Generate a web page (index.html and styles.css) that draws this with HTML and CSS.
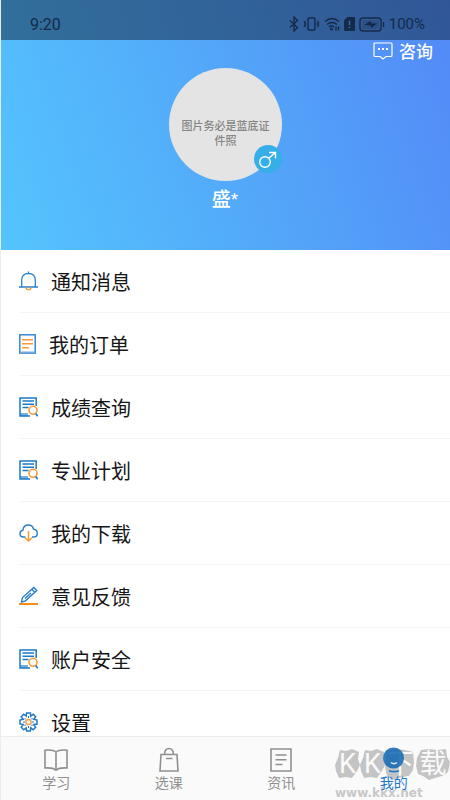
FILE: index.html
```html
<!DOCTYPE html>
<html lang="zh-CN">
<head>
<meta charset="utf-8">
<meta name="viewport" content="width=device-width, initial-scale=1">
<title>我的</title>
<link rel="stylesheet" href="styles.css">
</head>
<body>
<svg class="defs" aria-hidden="true">
  <symbol id="report" viewBox="0 0 19 20">
    <path d="M17.200 9V1H1v18h10" fill="none" stroke="#1d78c6" stroke-width="1.500"/>
    <path d="M1 16h8v3H1z" fill="#1d78c6" opacity=".6"/>
    <path d="M3.500 4h11.500M3.500 7.300h11.500M3.500 10.500h6" stroke="#1d78c6" stroke-width="1.500"/>
    <circle cx="14" cy="13.300" r="4" fill="#fff" stroke="#f79a35" stroke-width="1.600"/>
    <path d="M16.700 16.500l2 2.800" stroke="#1d78c6" stroke-width="1.600"/>
  </symbol>
</svg>
<div class="app">
  <header class="hero">
    <div class="status">
      <span class="time">9:20</span>
      <div class="indicators">
        <svg width="10" height="16" viewBox="0 0 10 16"><path d="M1 4.500l7.500 7L5 15V1l3.500 3.500L1 11.500" class="ink"/></svg>
        <svg width="17" height="14" viewBox="0 0 17 14"><rect x="5" y="1" width="7" height="12" rx="1" class="ink"/><path d="M2.500 4L1.500 5.500l1 1.500-1 1.500 1 1.500M14.500 4l1 1.500-1 1.500 1 1.500-1 1.500" class="ink"/></svg>
        <svg width="16" height="14" viewBox="0 0 16 14"><path d="M1 4.500q7-6 14 0M3 7.500q5-4 10 0M5 10q3-2.500 5 0" class="ink"/><circle cx="7.500" cy="12" r="1.500" class="solid"/><path d="M12 9.500v4M14.500 9.500v4" class="ink"/></svg>
        <svg width="11" height="14" viewBox="0 0 11 14"><path d="M3.500 0H10q1 0 1 1v12q0 1-1 1H1q-1 0-1-1V3.500z" class="solid"/><path d="M5.500 3.500v4.500M5.500 9.500v1.500" stroke="#3b659f" stroke-width="1.600"/></svg>
        <svg width="26" height="15" viewBox="0 0 26 15"><rect x="1" y="1" width="21" height="13" rx="3" class="ink"/><rect x="3" y="3" width="17" height="9" rx="1" fill="#25405f" opacity=".4"/><path d="M5 8l7-4v2.500h6L12 11V8.500z" fill="#102a49"/><path d="M24.500 5v5" class="ink"/></svg>
        <span class="percent">100%</span>
      </div>
    </div>
    <div class="toolbar">
      <button class="consult" type="button">
        <svg width="20" height="18" viewBox="0 0 20 18"><path d="M7 14.500H2q-1 0-1-1V2q0-1 1-1h16q1 0 1 1v11.500q0 1-1 1h-5L10 17l-3-2.500" fill="none" stroke="#fff" stroke-width="1.200"/><path d="M5 7h2M9 7h2M13 7h2" stroke="#fff" stroke-width="1.800"/></svg>
        咨询
      </button>
    </div>
    <div class="profile">
      <div class="avatar">
        <span>图片务必是蓝底证件照</span>
        <svg class="gender" viewBox="0 0 28 28" role="img" aria-label="男"><circle cx="14" cy="14" r="14" fill="#36aee8"/><circle cx="11" cy="17" r="5.300" fill="none" stroke="#fff" stroke-width="1.400"/><path d="M15 13l6.500-5.500M15 7.500h6.500v6" fill="none" stroke="#fff" stroke-width="1.400"/></svg>
      </div>
      <h1 class="name">盛*</h1>
    </div>
  </header>

  <main class="menu">
    <a class="row" href="#messages"><svg width="19" height="20" viewBox="0 0 19 20"><path d="M0 16h19M2.700 16V9q0-6.500 6.800-6.500T16.300 9v7M9.500 2.500V.5" fill="none" stroke="#2b80cb" stroke-width="1.300"/><path d="M7 16.500q0 2.300 2.500 2.300t2.500-2.300" fill="none" stroke="#f9a03c" stroke-width="1.400"/></svg>通知消息</a>
    <a class="row" href="#orders"><svg width="17" height="20" viewBox="0 0 17 20"><rect x=".8" y=".8" width="15.400" height="18.400" fill="none" stroke="#2b80cb" stroke-width="1.400"/><path d="M1 18.500h15" stroke="#72aadb" stroke-width="2"/><path d="M3 5.800h11M3 9.800h11M3 13.800h7" stroke="#f79a35" stroke-width="1.400"/></svg>我的订单</a>
    <a class="row" href="#scores"><svg width="19" height="20"><use href="#report"/></svg>成绩查询</a>
    <a class="row" href="#plan"><svg width="19" height="20"><use href="#report"/></svg>专业计划</a>
    <a class="row" href="#downloads"><svg width="19" height="20" viewBox="0 0 19 20"><path d="M6.500 14H4.500Q1 14 1 10.800 1 7.500 4 7.200 4.200 2 9.500 2q4 0 5 4 3.800.8 3.800 4.200 0 3.800-3.800 3.800h-1.500" fill="none" stroke="#2b7fc9" stroke-width="1.400"/><path d="M9.500 8v10M6 14.800L9.500 18l3.500-3.200" fill="none" stroke="#f7992f" stroke-width="1.500"/></svg>我的下载</a>
    <a class="row" href="#feedback"><svg width="19" height="20" viewBox="0 0 19 20"><path d="M2.500 16l1-4.500L14.800 1.500l3 3L6.500 14.800zM13 3.500l2.800 2.800M6 12.500l6-5.500" fill="none" stroke="#2279c4" stroke-width="1.300"/><path d="M0 18h19" stroke="#f9891d" stroke-width="2"/></svg>意见反馈</a>
    <a class="row" href="#security"><svg width="19" height="20"><use href="#report"/></svg>账户安全</a>
    <a class="row" href="#settings"><svg width="19" height="20" viewBox="0 0 19 20"><path d="M7.600 1h3.800l.3 3.200 2.500-2 2.500 2.600-2 2.400 3.300.8v4l-3.300.6 2 2.600-2.500 2.600-2.500-2L11.400 19H7.600l-.4-3.200-2.500 2-2.500-2.600 2-2.600L1 12V8l3.200-.8-2-2.400 2.500-2.600 2.500 2z" fill="#fff" stroke="#2279c4" stroke-width="1.500"/><path d="M9.500 4v2M5.500 6l1.500 1.500M13.500 6L12 7.500M4 10h2M13 10h2M5.500 14L7 12.500M13.500 14L12 12.500M9.500 16v-2" stroke="#2279c4"/><circle cx="9.500" cy="10" r="2.600" fill="#fff" stroke="#f7a04a" stroke-width="1.500"/></svg>设置</a>
  </main>

  <nav class="tabs">
    <a class="tab" href="#study"><svg width="26" height="26" viewBox="0 0 26 26"><path d="M13 5Q10 2.500 2 3.200V21q8-.5 11 2.200Q16 20.500 24 21V3.200Q16 2.500 13 5zv18" class="line"/></svg>学习</a>
    <a class="tab" href="#courses"><svg width="26" height="26" viewBox="0 0 26 26"><path d="M5 7.500h16L22 24H4zM8.500 7Q9 1.500 13 1.500T17.500 7M10 11.500h6.500" class="line"/></svg>选课</a>
    <a class="tab" href="#news"><svg width="26" height="26" viewBox="0 0 26 26"><path d="M3 2h20v22H3zM7.500 8h11M7.500 12.800h11M7.500 17.500h7" class="line"/></svg>资讯</a>
    <a class="tab active" href="#mine" aria-current="page"><svg width="26" height="26" viewBox="0 0 26 26"><circle cx="12.500" cy="11" r="10.500" fill="#1669b4" opacity=".88"/><path d="M10 15.500q3 2.500 6 0" fill="none" stroke="#e5eef6" stroke-width="1.500"/><path d="M8 23.800q5 1.800 10 0" fill="none" stroke="#1d78cb" stroke-width="1.700"/></svg>我的</a>
  </nav>

  <div class="watermark">
    <svg class="blobs" viewBox="0 0 115 32" aria-hidden="true"><path d="M5 2l6 1 6-2 7 3-1 7 2 6-3 6-5 7-6-1-7 1-3-7-1-6 3-7zM30 2l6 1 6-2 7 3-1 7 2 6-3 6-5 7-6-1-7 1-3-7-1-6 3-7zM52 3l8-2 10 1 8 2 1 10-1 8-4 6-8 1-6 3-8-4-2-9 1-7zM86 2l8-1 8 1 9-1 1 8 3 5-2 10-6 4-7 2-6 2-6-4-5-2-2-8 1-8z"/></svg>
    <div class="marks"><span>K</span><span>K</span><span>下</span><span>载</span></div>
    <div class="site">www.kkx.net</div>
  </div>
</div>
</body>
</html>
```
FILE: styles.css
```css
* {
  box-sizing: border-box;
}

body {
  margin: 0;
  font-family: Roboto, "Noto Sans CJK SC", sans-serif;
  color: #161616;
}

a {
  color: inherit;
  text-decoration: none;
}

svg {
  flex: none;
}

.defs {
  position: absolute;
  width: 0;
  height: 0;
}

.app {
  position: relative;
  display: flex;
  flex-direction: column;
  height: 100vh;
  overflow: hidden;
  background: #fff;
  border-left: 1px solid #ececec;
}

.hero {
  flex: none;
  margin-left: -1px;
  padding-bottom: 38px;
  background: linear-gradient(70deg, #54c5fd 0%, #53a5f9 55%, #5389f7 100%);
  color: #fff;
}

.status {
  display: flex;
  align-items: center;
  justify-content: space-between;
  height: 40px;
  padding: 8px 25px 0 30px;
  background: rgba(20, 40, 65, 0.52);
  color: #132b49;
}

.time {
  font-size: 16px;
}

.indicators {
  display: flex;
  align-items: center;
  gap: 4px;
}

.percent {
  font-size: 15px;
}

.ink {
  fill: none;
  stroke: #132b49;
  stroke-width: 1.4;
}

.solid {
  fill: #132b49;
}

.toolbar {
  display: flex;
  justify-content: flex-end;
  padding-right: 17px;
}

.consult {
  display: flex;
  align-items: center;
  gap: 6px;
  padding: 0;
  border: 0;
  background: none;
  color: #fff;
  font: 500 17px/22px "Noto Sans CJK SC", sans-serif;
}

.profile {
  display: flex;
  flex-direction: column;
  align-items: center;
  padding-top: 6px;
}

.avatar {
  position: relative;
  display: flex;
  align-items: center;
  width: 113px;
  height: 113px;
  padding: 18px 9px 0 10px;
  border-radius: 50%;
  background: #e4e4e4;
  color: #858585;
  font-size: 11px;
  font-weight: 500;
  line-height: 15px;
  text-align: center;
}

.gender {
  position: absolute;
  right: 0;
  bottom: 8px;
  width: 28px;
  height: 28px;
}

.name {
  margin: 7px 0 0;
  font-family: "Liberation Sans", "Noto Sans CJK SC", sans-serif;
  font-size: 19px;
  font-weight: 500;
  line-height: 24px;
}

.menu {
  flex: 1;
  min-height: 0;
  overflow: hidden;
}

.row {
  display: flex;
  align-items: center;
  gap: 13px;
  height: 63px;
  margin-left: 18px;
  border-bottom: 1px solid #f5f5f5;
  font-size: 20px;
}

.tabs {
  display: flex;
  flex: none;
  height: 64px;
  margin-left: -1px;
  padding-top: 10px;
  border-top: 1px solid #ececec;
  background: #fafafa;
  color: #909090;
}

.tab {
  display: flex;
  flex: 1;
  flex-direction: column;
  align-items: center;
  font-size: 14px;
  line-height: 20px;
}

.line {
  fill: none;
  stroke: #909090;
  stroke-width: 1.6;
}

.active {
  position: relative;
  z-index: 2;
  color: #1d78cb;
}

.watermark {
  position: absolute;
  right: 0;
  bottom: 0;
  width: 115px;
  pointer-events: none;
}

.blobs {
  position: absolute;
  top: 0;
  left: 0;
  width: 115px;
  height: 32px;
  fill: #c4c4c4;
}

.marks {
  position: relative;
  display: grid;
  grid-template-columns: 25px 25px 31px 34px;
  color: #fafafa;
  font-size: 27px;
  line-height: 32px;
  text-align: center;
}

.site {
  margin-top: 6px;
  color: #c8c8c8;
  font: bold 12px/14px "DejaVu Sans", sans-serif;
}
```
